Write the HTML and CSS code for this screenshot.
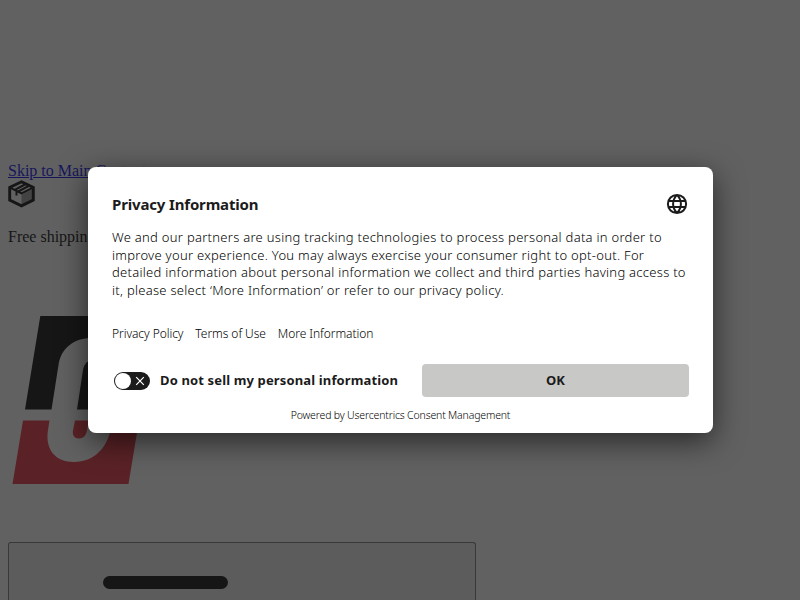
FILE: index.html
```html
<!DOCTYPE html>
<html lang="en">
<head>
  <meta charset="UTF-8">
  <meta name="viewport" content="width=device-width, initial-scale=1.0">
  <title>Privacy Information</title>
  <link rel="stylesheet" href="styles.css">
</head>
<body>
  <div class="page">
    <a class="skip" href="#main">Skip to Main Content</a>
    <svg class="box-icon" width="27" height="28" viewBox="0 0 27 28">
      <path d="M13.500 14.500L25 9v12l-11.500 6z" fill="#999"/>
      <path d="M13.500 1.800L25.300 7.500v12.600L13.500 25.800L1.700 20.100V7.500z" fill="none" stroke="#000" stroke-width="2.900"/>
      <path d="M2 7.700l11.500 5.700L25 7.700M6.800 9.800l11-5.800M10.300 11.500l11-5.800M8.500 10.500v5" fill="none" stroke="#000" stroke-width="2"/>
    </svg>
    <p class="shipping">Free shipping</p>
    <svg class="logo" width="150" height="170" viewBox="8 315 150 170">
      <path d="M40.300 316H160L144 409.500H25z" fill="#000"/>
      <path d="M23 420.500h116L128.500 484H12.500z" fill="#e62b39"/>
      <path d="M51.500 409.500L58.500 365C61 348 74 338 92 338h50l-20 71.500-11 19C107 448 94 462 74 462 55 462 45 449 48 430l1.500-9.500z" fill="#fff"/>
      <path d="M77 409.500L83 370q2-10 10-10h17l-8 49.500z" fill="#000"/>
      <path d="M75 420.500h14l-2 10c-1 5-3.500 8-8 8s-7-3.500-6-8z" fill="#e62b39"/>
    </svg>
    <button class="menu" aria-label="Menu"><span class="bar"></span></button>
  </div>

  <div class="overlay">
    <div class="dialog" role="dialog">
      <div class="header">
        <h2>Privacy Information</h2>
        <svg class="globe" width="24" height="24" viewBox="0 0 24 24">
          <path d="M12 2.900a9.100 9.100 0 1 0 0 18.200a9.100 9.100 0 1 0 0-18.200zM12 2.900c-5.200 5.500-5.200 12.700 0 18.200M12 2.900c5.200 5.500 5.200 12.700 0 18.200M3.600 9h16.800M3.600 15h16.800" fill="none" stroke="#1b1b1b" stroke-width="2"/>
        </svg>
      </div>
      <p class="text">
        <span class="line">We and our partners are using tracking technologies to process personal data in order to</span>
        <span class="line">improve your experience. You may always exercise your consumer right to opt-out. For</span>
        <span class="line">detailed information about personal information we collect and third parties having access to</span>
        <span class="line">it, please select ‘More Information’ or refer to our privacy policy.</span>
      </p>
      <div class="links">
        <a>Privacy Policy</a>
        <a>Terms of Use</a>
        <a>More Information</a>
      </div>
      <div class="actions">
        <div class="option">
          <span class="switch">
            <span class="knob"></span>
            <svg width="10" height="10" viewBox="0 0 10 10"><path d="M1.200 1.200l7.600 7.600M8.800 1.200L1.200 8.800" stroke="#fff" stroke-width="1.200"/></svg>
          </span>
          <span class="option-label">Do not sell my personal information</span>
        </div>
        <button class="ok">OK</button>
      </div>
      <div class="powered">Powered by Usercentrics Consent Management</div>
    </div>
  </div>
</body>
</html>
```
FILE: styles.css
```css
body {
  margin: 0;
  height: 600px;
  overflow: hidden;
  font-family: "Liberation Serif", serif;
  font-size: 16px;
}

.page {
  box-sizing: border-box;
  display: flex;
  flex-direction: column;
  align-items: flex-start;
  height: 600px;
  overflow: hidden;
  padding: 162px 8px 0;
}

.skip {
  color: #0000ee;
  line-height: 18px;
}

.box-icon {
  display: block;
  flex-shrink: 0;
}

.shipping {
  margin: 20px 0 0;
  line-height: 18px;
}

.logo {
  display: block;
  flex-shrink: 0;
  margin-top: 69px;
}

.menu {
  box-sizing: border-box;
  width: 468px;
  height: 58px;
  margin-top: 57px;
  padding: 33px 0 0 94px;
  border: 1px solid #767676;
  border-bottom: none;
  border-radius: 3px 3px 0 0;
  background-color: #efefef;
  display: flex;
  flex-shrink: 0;
  align-items: flex-start;
}

.bar {
  width: 125px;
  height: 13px;
  border-radius: 7px;
  background-color: #000;
}

.overlay {
  position: absolute;
  inset: 0;
  display: flex;
  justify-content: center;
  align-items: center;
  background-color: rgba(31, 31, 31, 0.705);
  font-family: "Noto Sans", sans-serif;
  color: #1b1b1b;
}

.dialog {
  box-sizing: border-box;
  width: 625px;
  height: 266px;
  margin-left: 1px;
  padding: 24px 24px 0;
  border-radius: 8px;
  background-color: #fff;
  box-shadow: 0 8px 30px rgba(0, 0, 0, 0.6);
}

.header {
  display: flex;
  justify-content: space-between;
  align-items: center;
  height: 26px;
}

h2 {
  margin: 0;
  font-size: 15px;
  line-height: 26px;
  letter-spacing: -0.16px;
}

.text {
  margin: 12px 0 0;
  font-size: 13px;
  font-weight: 300;
  line-height: 17.6px;
  letter-spacing: 0.28px;
  color: #000;
}

.line {
  display: block;
  white-space: nowrap;
}

.links {
  display: flex;
  gap: 12px;
  margin-top: 26px;
  font-size: 12px;
  font-weight: 300;
  line-height: 18px;
  letter-spacing: -0.06px;
  color: #000;
}

.actions {
  display: flex;
  justify-content: space-between;
  margin-top: 21px;
}

.option {
  display: flex;
  align-items: center;
  height: 33px;
  padding-left: 2px;
}

.switch {
  box-sizing: border-box;
  display: flex;
  align-items: center;
  justify-content: space-between;
  width: 36px;
  height: 18px;
  padding: 1px 5px 1px 1px;
  border-radius: 9px;
  background-color: #1b1b1b;
}

.knob {
  width: 16px;
  height: 16px;
  border-radius: 50%;
  background-color: #fff;
}

.option-label {
  margin-left: 10px;
  padding-bottom: 2px;
  font-size: 13px;
  font-weight: 700;
  letter-spacing: 0.14px;
  white-space: nowrap;
}

.ok {
  width: 267px;
  height: 33px;
  padding: 0 0 2px;
  border: none;
  border-radius: 4px;
  background-color: #c8c8c7;
  font-family: inherit;
  font-size: 13px;
  font-weight: 700;
  letter-spacing: 0.14px;
  color: #1b1b1b;
}

.powered {
  margin-top: 10px;
  font-size: 10.5px;
  font-weight: 300;
  line-height: 16px;
  letter-spacing: -0.16px;
  text-align: center;
  color: #000;
}
```
